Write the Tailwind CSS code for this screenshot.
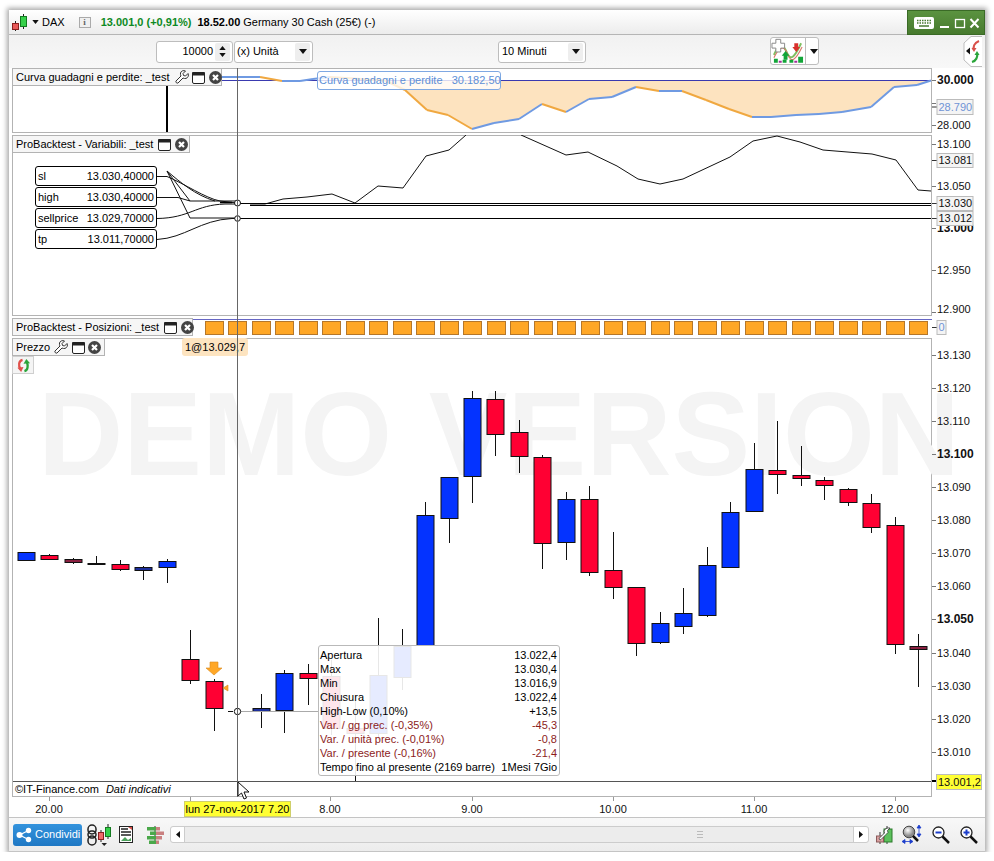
<!DOCTYPE html>
<html lang="it">
<head>
<meta charset="UTF-8" />
<title>DAX - ProRealTime</title>
<script src="https://cdn.jsdelivr.net/npm/@tailwindcss/browser@4"></script>
</head>
<body class="bg-white text-black text-[11px] leading-none overflow-hidden font-['Liberation_Sans',Arial,sans-serif]">
<!-- shared icons -->
<svg width="0" height="0" class="absolute">
  <symbol id="wrench" viewBox="0 0 14 14"><path d="M13 3.500L10.500 6 8.500 5.500 8 3.500 10.500 1C8.500 0 6 1 5.500 3 5.200 4.200 5.600 5 6 6L1 11C.2 12 2 13.800 3 13L8 8C9 8.400 10 8.700 11 8.400 13 7.800 14 5.500 13 3.500Z" fill="#fff" stroke="#333"/></symbol>
  <symbol id="win" viewBox="0 0 13 13"><rect x=".5" y="1.500" width="12" height="11" rx="1.500" fill="#fff" stroke="#222"/><rect x="0" y="1" width="13" height="3.500" rx="1" fill="#222"/></symbol>
  <symbol id="close" viewBox="0 0 13 13"><circle cx="6.500" cy="6.500" r="6.500" fill="#444"/><path d="M4 4L9 9M9 4L4 9" stroke="#fff" stroke-width="2.200"/></symbol>
  <symbol id="flip" viewBox="0 0 16 16"><path d="M7 2C3 3 2 8 5 12" fill="none" stroke="#e0504a" stroke-width="2.400"/><path d="M1.500 10.500L5.500 15 8 9.500Z" fill="#e0504a"/><path d="M9 14C13 13 13 8 11.500 4" fill="none" stroke="#2aa53a" stroke-width="2.400"/><path d="M8 6L11 1 15 5.500Z" fill="#2aa53a"/></symbol>
  <symbol id="caret" viewBox="0 0 8 5"><path d="M0 0H8L4 5Z" fill="#111"/></symbol>
</svg>

<div class="ml-[9px] mt-[10px] w-[976px] h-[842px] relative flex flex-col bg-white shadow-[0_0_5px_2px_rgba(0,0,0,0.35)]">

  <!-- title bar -->
  <div class="h-[25px] shrink-0 flex items-center border-b border-[#b5b5b5] bg-gradient-to-b from-white to-[#ececec] pl-[3px] relative">
    <svg width="15" height="18" viewBox="0 0 15 18" class="mt-[2px]">
      <path d="M3.500 7V17M11.500 0V15" stroke="#222"/>
      <rect x=".5" y="9.500" width="6" height="6" fill="#e85a5a" stroke="#8a1f1f"/>
      <rect x="8.500" y="2.500" width="6" height="10" fill="#36d04a" stroke="#137a20"/>
    </svg>
    <svg width="7" height="4" class="ml-[5px]"><use href="#caret"/></svg>
    <span class="ml-[3px] mt-px">DAX</span>
    <span class="ml-[14px] w-[12px] h-[11px] border border-[#aaa] bg-[#f0f0f0] text-[9px] font-bold text-[#666] flex items-center justify-center font-['Liberation_Serif',serif]">i</span>
    <span class="ml-[10px] font-bold text-[#0d8a23] mt-px">13.001,0 (+0,91%)</span>
    <span class="ml-[6px] font-bold mt-px">18.52.00</span>
    <span class="ml-[3px] mt-px">Germany 30 Cash (25€) (-)</span>
    <div class="absolute right-0 top-0 w-[78px] h-[25px] bg-gradient-to-b from-[#5b9340] to-[#477a2e] border border-[#3a6a26] flex items-center pl-[6px] gap-[6px]">
      <svg width="20" height="12" viewBox="0 0 20 12"><rect width="20" height="12" rx="2" fill="#fff"/><path d="M3 3.500H17M3 6H17" stroke="#4a7a33" stroke-dasharray="1.500 1" stroke-width="1.500"/><path d="M5 9H15" stroke="#4a7a33" stroke-width="1.500"/></svg>
      <svg width="40" height="12" viewBox="0 0 40 12"><path d="M0 10H9" stroke="#fff" stroke-width="2"/><rect x="15.500" y="2.500" width="9" height="8" fill="none" stroke="#fff" stroke-width="1.300"/><path d="M30.500 2L38.500 10.500M38.500 2L30.500 10.500" stroke="#fff" stroke-width="2"/></svg>
    </div>
  </div>

  <!-- toolbar -->
  <div class="h-[33px] shrink-0 relative flex items-center bg-gradient-to-b from-[#f1f1f1] to-[#f8f8f8]">
    <div class="ml-[147px] w-[77px] h-[22px] flex items-center justify-end border border-[#bdbdbd] rounded-[3px] bg-white pr-[2px]">
      <span>10000</span>
      <span class="ml-[2px] w-[15px] h-[18px] bg-[#eeeeee] rounded-[2px] flex flex-col items-center justify-center gap-[3px]">
        <svg width="7" height="4" class="rotate-180"><use href="#caret"/></svg>
        <svg width="7" height="4"><use href="#caret"/></svg>
      </span>
    </div>
    <div class="ml-px w-[79px] h-[22px] flex items-center justify-between border border-[#bdbdbd] rounded-[3px] bg-white pl-[2px] pr-[2px]">
      <span>(x) Unità</span>
      <span class="w-[15px] h-[18px] bg-[#eeeeee] rounded-[2px] flex items-center justify-center"><svg width="8" height="5"><use href="#caret"/></svg></span>
    </div>
    <div class="ml-[185px] w-[88px] h-[22px] flex items-center justify-between border border-[#bdbdbd] rounded-[3px] bg-white pl-[3px] pr-[2px]">
      <span>10 Minuti</span>
      <span class="w-[15px] h-[18px] bg-[#eeeeee] rounded-[2px] flex items-center justify-center"><svg width="8" height="5"><use href="#caret"/></svg></span>
    </div>
    <div class="ml-[184px] w-[49px] h-[28px] -mt-[1px] flex items-center border border-[#bdbdbd] rounded-[3px] bg-white">
      <svg width="35" height="26" viewBox="0 0 35 26" class="border-r border-[#bdbdbd] shrink-0">
        <path d="M3 17C8 5 12 4 16 14S24 20 31 5" fill="none" stroke="#7fbf60" stroke-width="2"/>
        <path d="M3 20C8 9 13 6 17 16S25 23 32 9" fill="none" stroke="#d97a6a" stroke-width="1.200"/>
        <path d="M5 1H10V5H14V10H10V14H5V10H1V5H5Z" fill="#fff" stroke="#888"/>
        <path d="M13 22H17V18H19L15 13 11 18H13Z" fill="#12a538"/>
        <path d="M24 5H28V9H30L26 14 22 9H24Z" fill="#d9302c"/>
        <path d="M3 21H7V25H3ZM12 22H16V25H12ZM19 22H23V25H19ZM28 19H33V25H28Z" fill="#12a538"/>
        <path d="M8 23H11V25H8ZM24 23H27V25H24Z" fill="#a02f9a"/>
      </svg>
      <svg width="8" height="5" class="ml-[4px]"><use href="#caret"/></svg>
    </div>
    <div class="absolute right-[3px] top-[1px] w-[19px] h-[31px]">
      <svg width="19" height="31" viewBox="0 0 19 31">
        <path d="M19 0.500H8L1 7V24L8 30.500H19" fill="#fff" stroke="#bdbdbd"/>
        <path d="M3 15L7 11.500V18.500Z" fill="#111"/>
        <path d="M16 5C11 7 10 11 11 14" fill="none" stroke="#d9504a" stroke-width="2.200"/>
        <path d="M8.500 12H13.500L11 16Z" fill="#d9504a"/>
        <path d="M9 26C13 25 15 21 14 17" fill="none" stroke="#2aa53a" stroke-width="2.200"/>
        <path d="M11.500 19H16.500L14 15Z" fill="#2aa53a"/>
      </svg>
    </div>
  </div>

  <!-- chart rows -->
  <div class="relative flex flex-col gap-[2px] pl-[3px] flex-1 min-h-0 bg-white">

    <!-- gain / loss curve -->
    <div class="flex h-[65px] shrink-0">
      <div class="relative w-[920px] border border-[#b3b3b3] bg-white">
        <svg id="equity" width="920" height="65" viewBox="12 68 920 65" class="absolute -inset-px"></svg>
        <div class="absolute -left-px -top-px h-[18px] w-[210px] flex items-center border border-[#b3b3b3] bg-[#f6f6f6] pl-[3px] whitespace-nowrap">
          <span>Curva guadagni e perdite: _test</span>
          <svg width="14" height="14" class="ml-[5px] shrink-0"><use href="#wrench"/></svg>
          <svg width="13" height="13" class="ml-[3px] shrink-0"><use href="#win"/></svg>
          <svg width="13" height="13" class="ml-[4px] shrink-0"><use href="#close"/></svg>
        </div>
        <div class="absolute left-[304px] top-[2px] h-[19px] w-[184px] flex items-center border border-[#7fa8e2] rounded-[3px] bg-white/80 pl-[1px] text-[#5d8fd6] whitespace-pre">Curva guadagni e perdite   30.182,50</div>
      </div>
      <svg id="axis1" width="53" height="65" viewBox="932 68 53 65"></svg>
    </div>

    <!-- variables -->
    <div class="flex h-[181px] shrink-0">
      <div class="relative w-[920px] border border-[#b3b3b3] bg-white">
        <svg id="vars" width="920" height="181" viewBox="12 135 920 181" class="absolute -inset-px"></svg>
        <div class="absolute -left-px -top-px h-[18px] w-[178px] flex items-center border border-[#b3b3b3] bg-[#f6f6f6] pl-[3px] whitespace-nowrap">
          <span>ProBacktest - Variabili: _test</span>
          <svg width="13" height="13" class="ml-[5px] shrink-0"><use href="#win"/></svg>
          <svg width="13" height="13" class="ml-[4px] shrink-0"><use href="#close"/></svg>
        </div>
        <div class="absolute left-[22px] top-[30px] w-[122px] flex flex-col gap-px">
          <div class="h-[20px] flex items-center justify-between border border-black rounded-[3px] bg-white px-[2px]"><span>sl</span><span>13.030,40000</span></div>
          <div class="h-[20px] flex items-center justify-between border border-black rounded-[3px] bg-white px-[2px]"><span>high</span><span>13.030,40000</span></div>
          <div class="h-[20px] flex items-center justify-between border border-black rounded-[3px] bg-white px-[2px]"><span>sellprice</span><span>13.029,70000</span></div>
          <div class="h-[20px] flex items-center justify-between border border-black rounded-[3px] bg-white px-[2px]"><span>tp</span><span>13.011,70000</span></div>
        </div>
      </div>
      <svg id="axis2" width="53" height="181" viewBox="932 135 53 181"></svg>
    </div>

    <!-- positions -->
    <div class="flex h-[18px] shrink-0">
      <div class="relative w-[920px] bg-white">
        <svg id="pos" width="920" height="18" viewBox="12 318 920 18" class="absolute inset-0"></svg>
        <div class="absolute left-0 top-0 h-[18px] w-[181px] flex items-center border border-[#b3b3b3] bg-[#f6f6f6] pl-[3px] whitespace-nowrap">
          <span>ProBacktest - Posizioni: _test</span>
          <svg width="13" height="13" class="ml-[5px] shrink-0"><use href="#win"/></svg>
          <svg width="13" height="13" class="ml-[4px] shrink-0"><use href="#close"/></svg>
        </div>
      </div>
      <svg id="axis3" width="53" height="18" viewBox="932 318 53 18"></svg>
    </div>

    <!-- price -->
    <div class="flex h-[459px] shrink-0">
      <div class="relative w-[920px] border border-[#b3b3b3] bg-white flex flex-col justify-end">
        <svg id="price" width="920" height="459" viewBox="12 338 920 459" class="absolute -inset-px overflow-visible"></svg>
        <div class="absolute -left-px -top-px h-[18px] w-[93px] flex items-center border border-[#b3b3b3] bg-[#f6f6f6] pl-[3px]">
          <span>Prezzo</span>
          <svg width="14" height="14" class="ml-[4px] shrink-0"><use href="#wrench"/></svg>
          <svg width="13" height="13" class="ml-[4px] shrink-0"><use href="#win"/></svg>
          <svg width="13" height="13" class="ml-[3px] shrink-0"><use href="#close"/></svg>
        </div>
        <div class="absolute -left-px top-[17px] w-[22px] h-[18px] flex items-center justify-center border border-[#cfcfcf] bg-[#f4f4f4]">
          <svg width="15" height="15"><use href="#flip"/></svg>
        </div>
        <div class="absolute left-[169px] top-[-1px] w-[66px] h-[18px] flex items-center pl-[3px] rounded-[3px] bg-[#fde4c0]">1@13.029,7</div>

        <!-- ohlc tooltip -->
        <div class="absolute left-[305px] top-[306px] w-[242px] h-[131px] flex flex-col pt-[2px] pl-[1px] pr-[2px] border border-[#b9b9b9] rounded-[3px] bg-white/90 z-10">
          <div class="h-[14px] flex items-center justify-between"><span>Apertura</span><span>13.022,4</span></div>
          <div class="h-[14px] flex items-center justify-between"><span>Max</span><span>13.030,4</span></div>
          <div class="h-[14px] flex items-center justify-between"><span>Min</span><span>13.016,9</span></div>
          <div class="h-[14px] flex items-center justify-between"><span>Chiusura</span><span>13.022,4</span></div>
          <div class="h-[14px] flex items-center justify-between"><span>High-Low (0,10%)</span><span>+13,5</span></div>
          <div class="h-[14px] flex items-center justify-between text-[#8c1c1c]"><span>Var. / gg prec. (-0,35%)</span><span>-45,3</span></div>
          <div class="h-[14px] flex items-center justify-between text-[#8c1c1c]"><span>Var. / unità prec. (-0,01%)</span><span>-0,8</span></div>
          <div class="h-[14px] flex items-center justify-between text-[#8c1c1c]"><span>Var. / presente (-0,16%)</span><span>-21,4</span></div>
          <div class="h-[14px] flex items-center justify-between"><span>Tempo fino al presente (2169 barre)</span><span>1Mesi 7Gio</span></div>
        </div>

        <div class="relative h-[15px] flex items-center border-t border-[#555] pl-[2px] gap-[7px]">
          <span>©IT-Finance.com</span><span class="italic">Dati indicativi</span>
        </div>
      </div>
      <svg id="axis4" width="53" height="459" viewBox="932 338 53 459" class="relative"></svg>
    </div>

    <!-- time axis -->
    <div class="relative h-[20px] -mt-[2px] shrink-0 w-[920px]">
      <svg id="timeaxis" width="920" height="20" viewBox="12 797 920 20" class="absolute inset-0"></svg>
      <div class="absolute left-[172px] top-[4px] h-[16px] w-[107px] flex items-center justify-center bg-[#ffff33] border border-[#cfcf6a] whitespace-nowrap">lun 27-nov-2017 7.20</div>
    </div>

    <!-- crosshair and mouse pointer -->
    <div class="absolute left-[228px] top-0 w-px h-[729px] bg-[#666]"></div>
    <svg width="14" height="20" viewBox="0 0 14 20" class="absolute left-[228px] top-[713px] z-20"><path d="M1 1V15L4.500 12 7 18 9.500 17 7 11H12Z" fill="#fff" stroke="#111"/></svg>
  </div>

  <!-- bottom toolbar -->
  <div class="h-[35px] shrink-0 flex items-center relative border-t border-b border-[#c4c4c4] bg-gradient-to-b from-[#f8f8f8] to-[#ececec] pl-[4px]">
    <div class="w-[69px] h-[22px] flex items-center rounded-[3px] bg-gradient-to-b from-[#3393dd] to-[#1f78c4] text-white pl-[3px] gap-[3px] text-[11px]">
      <svg width="16" height="16" viewBox="0 0 16 16" class="shrink-0"><path d="M12.500 3.500L3.500 8 12.500 12.500" fill="none" stroke="#fff" stroke-width="1.300"/><circle cx="3.500" cy="8" r="3" fill="#fff"/><circle cx="12.500" cy="3.500" r="2.700" fill="#fff"/><circle cx="12.500" cy="12.500" r="2.700" fill="#fff"/></svg>
      <span>Condividi</span>
    </div>
    <svg width="24" height="22" viewBox="0 0 24 22" class="ml-[5px]">
      <rect x="1" y="1" width="8" height="9" rx="4" fill="none" stroke="#222" stroke-width="1.500"/><rect x="1" y="7" width="8" height="7" rx="3.500" fill="none" stroke="#222" stroke-width="1.500"/><rect x="1" y="12" width="8" height="9" rx="4" fill="none" stroke="#222" stroke-width="1.500"/>
      <path d="M14 6V18M21 0V15" stroke="#222"/><rect x="11.500" y="8.500" width="5" height="7" fill="#f06a6a" stroke="#8a1f1f"/><rect x="18.500" y="3.500" width="5" height="9" fill="#36d04a" stroke="#137a20"/>
      <path d="M14.500 19H20L17.200 22Z" fill="#222"/>
    </svg>
    <svg width="14" height="17" viewBox="0 0 14 17" class="ml-[8px]">
      <rect x=".5" y=".5" width="13" height="16" fill="#fff" stroke="#222"/><path d="M2 3H9M2 6H12M2 9H12" stroke="#222" stroke-width="1.300"/><path d="M2 15L6 11 9 14 12 12V15Z" fill="#4aa05a"/><path d="M9 1H13V4Z" fill="#d9504a"/>
    </svg>
    <svg width="17" height="18" viewBox="0 0 17 18" class="ml-[14px]">
      <path d="M8 0V18" stroke="#333"/>
      <rect y="1" width="9" height="3.500" fill="#4aa84a"/><rect x="9" y="1" width="4" height="3.500" fill="#c98080"/>
      <rect x="3" y="5.500" width="6" height="3.500" fill="#4aa84a"/><rect x="9" y="5.500" width="8" height="3.500" fill="#c98080"/>
      <rect y="10" width="9" height="3.500" fill="#4aa84a"/><rect x="9" y="10" width="6" height="3.500" fill="#c98080"/>
      <rect x="2" y="14.500" width="7" height="3.500" fill="#4aa84a"/><rect x="9" y="14.500" width="3" height="3.500" fill="#c98080"/>
    </svg>
    <div class="ml-[6px] w-[699px] h-[17px] shrink-0 flex items-center justify-between relative border border-[#cccccc] rounded-[3px] bg-[#ececec]">
      <span class="w-[14px] h-[15px] border-r border-[#cccccc] bg-white rounded-l-[3px] flex items-center justify-center"><svg width="4" height="7"><path d="M4 0V7L0 3.500Z" fill="#111"/></svg></span>
      <svg width="6" height="9" class="absolute left-[526px] top-[3px]"><path d="M0 1.500H6M0 4.500H6M0 7.500H6" stroke="#bbb"/></svg>
      <span class="w-[15px] h-[15px] border-l border-[#cccccc] bg-white rounded-r-[3px] flex items-center justify-center"><svg width="4" height="7"><path d="M0 0V7L4 3.500Z" fill="#111"/></svg></span>
    </div>
    <svg width="17" height="18" viewBox="0 0 17 18" class="ml-[7px] shrink-0">
      <path d="M11 0V18M4 6V18" stroke="#333"/><rect x="8" y="3" width="8" height="13" fill="#5cc05c" stroke="#2a7a2a"/><rect x="0.500" y="10" width="7" height="6" fill="#d9a0a0" stroke="#8a5a5a"/>
      <path d="M14 2L11.500 4.500 12 6.500 10 8.500 5 13.500C4 14.500 2.500 13 3.500 12L8.500 7 8 5C8.500 3 11 1.500 14 2Z" fill="#fff" stroke="#333" stroke-width=".8"/>
    </svg>
    <svg width="20" height="20" viewBox="0 0 20 20" class="ml-[9px] shrink-0">
      <defs><radialGradient id="ball" cx=".4" cy=".35"><stop offset="0" stop-color="#fff"/><stop offset="1" stop-color="#888"/></radialGradient></defs>
      <circle cx="7" cy="7" r="5.800" fill="url(#ball)" stroke="#444"/><path d="M11 11L16 16" stroke="#111" stroke-width="2.500"/>
      <path d="M17 0L15 3H19ZM17 12L15 9H19ZM17 3V9M0 16.500L3 14.500V18.500ZM11 16.500L8 14.500V18.500ZM3 16.500H8" fill="#1c3ecb" stroke="#1c3ecb" stroke-width=".8"/>
    </svg>
    <svg width="18" height="18" viewBox="0 0 18 18" class="ml-[10px] shrink-0">
      <circle cx="6.500" cy="6.500" r="5.500" fill="#fff" stroke="#222" stroke-width="1.300"/><path d="M3.500 6.500H9.500" stroke="#1c3ecb" stroke-width="2"/><path d="M10.500 10.500L17 17" stroke="#111" stroke-width="2.500"/>
    </svg>
    <svg width="18" height="18" viewBox="0 0 18 18" class="ml-[10px] shrink-0">
      <circle cx="6.500" cy="6.500" r="5.500" fill="#fff" stroke="#222" stroke-width="1.300"/><path d="M3.500 6.500H9.500M6.500 3.500V9.500" stroke="#1c3ecb" stroke-width="2"/><path d="M10.500 10.500L17 17" stroke="#111" stroke-width="2.500"/>
    </svg>
  </div>
</div>

<script>
  // [centre x, wick top, wick bottom, body top, body bottom, colour]
  var BLUE = "#0433ff", RED = "#ff0033", DBLUE = "#1d2f9c", DRED = "#8a2040";
  var candles = [
    [26,552,561,552,560,BLUE],[49,554,559,555,559,RED],[73,558,564,559,562,DRED],[96,556,563,562.5,563.5,"#111"],
    [120,560,571,564,569,RED],[143,566,580,567,570,DBLUE],[167,559,583,561,567,BLUE],[190,630,684,659,680,RED],
    [214,679,731,681,708,RED],[261,694,728,708,711,DBLUE],[284,670,733,673,710,BLUE],[308,664,705,673,678,RED],
    [331,660,735,676,728,RED],[355,700,781,728,733,RED],[378,618,740,675,733,BLUE],[402,629,690,646,677,BLUE],
    [425,502,645,515,645,BLUE],[449,477,543,477,518,BLUE],[472,391,503,398,476,BLUE],[495,391,456,399,434,RED],
    [519,420,473,432,456,RED],[542,455,569,457,543,RED],[566,492,560,499,542,BLUE],[589,486,576,499,572,RED],
    [613,532,599,570,587,RED],[636,587,656,587,643,RED],[660,612,644,623,642,BLUE],[683,588,634,613,626,BLUE],
    [707,547,617,565,615,BLUE],[730,502,567,512,567,BLUE],[754,443,511,469,511,BLUE],[777,421,494,470,474,RED],
    [801,446,486,475,478,RED],[824,477,500,480,485,RED],[848,488,506,489,502,RED],[871,494,533,503,527,RED],
    [895,517,654,525,644,RED],[918,634,687,646,649,DRED]
  ];

  var price = '<text x="38" y="475" font-size="118" font-weight="700" word-spacing="4" fill="#f4f4f4">DEMO VERSION</text>';
  candles.forEach(function (c) {
    price += '<path d="M' + (c[0] + 0.5) + ' ' + c[1] + 'V' + c[2] + '" stroke="#111"/>';
    price += '<rect x="' + (c[0] - 8) + '" y="' + (Math.round(c[3]) + 0.5) + '" width="17" height="' + Math.max(Math.round(c[4] - c[3]), 1) + '" fill="' + c[5] + '" stroke="#111"/>';
  });
  price += '<path d="M237.500 683V730" stroke="#111"/><path d="M228 711.500H233" stroke="#111"/><path d="M240 711.500H318" stroke="#aaa"/>';
  price += '<circle cx="237.500" cy="711.500" r="3.200" fill="#fff" stroke="#111"/>';
  price += '<path d="M210 662H218V668H222L214 675 206 668H210Z" fill="#ffa726" stroke="#d98a20" stroke-width=".6"/>';
  price += '<path d="M223 688L228 685V691Z" fill="#ffa726" stroke="#d98a20" stroke-width=".6"/>';
  document.getElementById("price").innerHTML = price;

  // equity curve, page coordinates
  var down = "#f0a840", up = "#6f9ae2";
  var curve = [[222,77],[260,77],[282,81],[300,81],[313,79],[330,77],[385,80.5],[405,90],[427,110],[448,115],[472,129],[494,123],[519,119],[542,104],[566,112],[589,99],[612,97],[636,87],[659,91],[682,91],[706,100],[729,109],[752,117],[771,117],[796,115],[819,114],[842,112],[871,107],[894,87],[917,85],[931,80.5]];
  var eq = '<path d="M385 80.500' + curve.slice(7).map(function (p) { return "L" + p[0] + " " + p[1]; }).join("") + 'Z" fill="#fde3bf"/>';
  eq += '<path d="M167 86V132" stroke="#000" stroke-width="2"/>';
  eq += '<path d="M222 80.500H931" stroke="#3a3ab0"/>';
  for (var i = 1; i < curve.length; i++) {
    var a = curve[i - 1], b = curve[i];
    eq += '<path d="M' + a[0] + " " + a[1] + "L" + b[0] + " " + b[1] + '" fill="none" stroke-width="2" stroke="' + (b[1] > a[1] ? down : up) + '"/>';
  }
  document.getElementById("equity").innerHTML = eq;

  // variables panel
  document.getElementById("vars").innerHTML =
    '<path d="M250 204L265 204 283 199 307 197 332 194 355 203 378 186 403 188 426 156 449 150 466 135M521 135L566 155 588 152 617 166 638 179 660 184 683 179 730 157 753 141 777 136 800 142 823 150 872 154 896 160 918 190 931 191" fill="none" stroke="#111"/>' +
    '<path d="M237 203.500H931M250 205.500H931M237 218.500H931" stroke="#000"/>' +
    '<path d="M157 176.500H167C185 184 205 198 220 201L237 203M167 171L190 201H237M167 171L190 218H237M167 171C180 182 195 195 215 201M157 197.500H178L190 201M157 218.500C190 218 195 205 225 204H237M157 239.500C185 238 200 220 232 218.500H237" fill="none" stroke="#111"/>' +
    '<path d="M220 202.500H232" stroke="#000" stroke-width="1.500"/>' +
    '<circle cx="237.500" cy="203" r="3" fill="#fff" stroke="#111"/><circle cx="237.500" cy="218.500" r="2.800" fill="#fff" stroke="#111"/>';

  // position squares
  var pos = '<path d="M193 319.500H932" stroke="#6666c4"/>';
  for (var k = 0; k < 31; k++) {
    var x = Math.round(205 + k * 23.47);
    pos += '<rect x="' + (x + 0.5) + '" y="321.500" width="18" height="13" fill="#ffa726" stroke="#b5772a"/>';
  }
  document.getElementById("pos").innerHTML = pos;

  // axes
  function tick(y, label, bold) {
    return '<path d="M932 ' + (y + 0.5) + 'H936" stroke="#777"/>' +
      '<text x="937" y="' + (y + 4) + '" font-size="' + (bold ? 12 : 11) + '" font-weight="' + (bold ? 700 : 400) + '" fill="#111">' + label + "</text>";
  }
  function box(y, h, w, label, colour, fill) {
    return '<path d="M932 ' + (y + h / 2 + 0.5) + 'H937" stroke="#333"/>' +
      '<rect x="937" y="' + (y + 0.5) + '" width="' + w + '" height="' + h + '" fill="' + (fill || "#f4f4f4") + '" stroke="#bbb"/>' +
      '<text x="938.500" y="' + (y + h / 2 + 4) + '" font-size="11" fill="' + colour + '">' + label + "</text>";
  }
  document.getElementById("axis1").innerHTML =
    tick(80, "30.000", true) + tick(125, "28.000") + tick(103, "29.000") + box(99, 15, 36, "28.790", "#6f93d6");
  document.getElementById("axis2").innerHTML =
    tick(144, "13.100") + tick(186, "13.050") + tick(228, "13.000", true) + tick(270, "12.950") +
    '<path d="M932 312.500H936" stroke="#777"/><text x="937" y="313" font-size="11" fill="#111">12.900</text>' +
    box(153, 14, 36, "13.081", "#111") + box(196, 14, 36, "13.030", "#111") + box(211, 14, 36, "13.012", "#111");
  document.getElementById("axis3").innerHTML = box(320, 14, 9, "0", "#6f93d6");

  var a4 = "";
  [[355,"13.130"],[388,"13.120"],[421,"13.110"],[454,"13.100",true],[487,"13.090"],[520,"13.080"],[553,"13.070"],[586,"13.060"],[619,"13.050",true],[653,"13.040"],[686,"13.030"],[719,"13.020"],[752,"13.010"]].forEach(function (t) {
    a4 += tick(t[0], t[1], t[2]);
  });
  a4 += '<path d="M932 781H937" stroke="#000" stroke-width="2"/><rect x="936.500" y="774.500" width="45" height="15" fill="#ffff33" stroke="#bbb"/><text x="938" y="785.500" font-size="11" fill="#111">13.001,2</text>';
  document.getElementById("axis4").innerHTML = a4;

  var t = "";
  [[49,"20.00"],[330,"8.00"],[472,"9.00"],[613,"10.00"],[754,"11.00"],[895,"12.00"]].forEach(function (l) {
    t += '<path d="M' + (l[0] + 0.5) + ' 797V801" stroke="#999"/><text x="' + l[0] + '" y="813" font-size="11" text-anchor="middle" fill="#111">' + l[1] + "</text>";
  });
  t += '<path d="M190.500 797V801" stroke="#999"/>';
  document.getElementById("timeaxis").innerHTML = t;
</script>
</body>
</html>
